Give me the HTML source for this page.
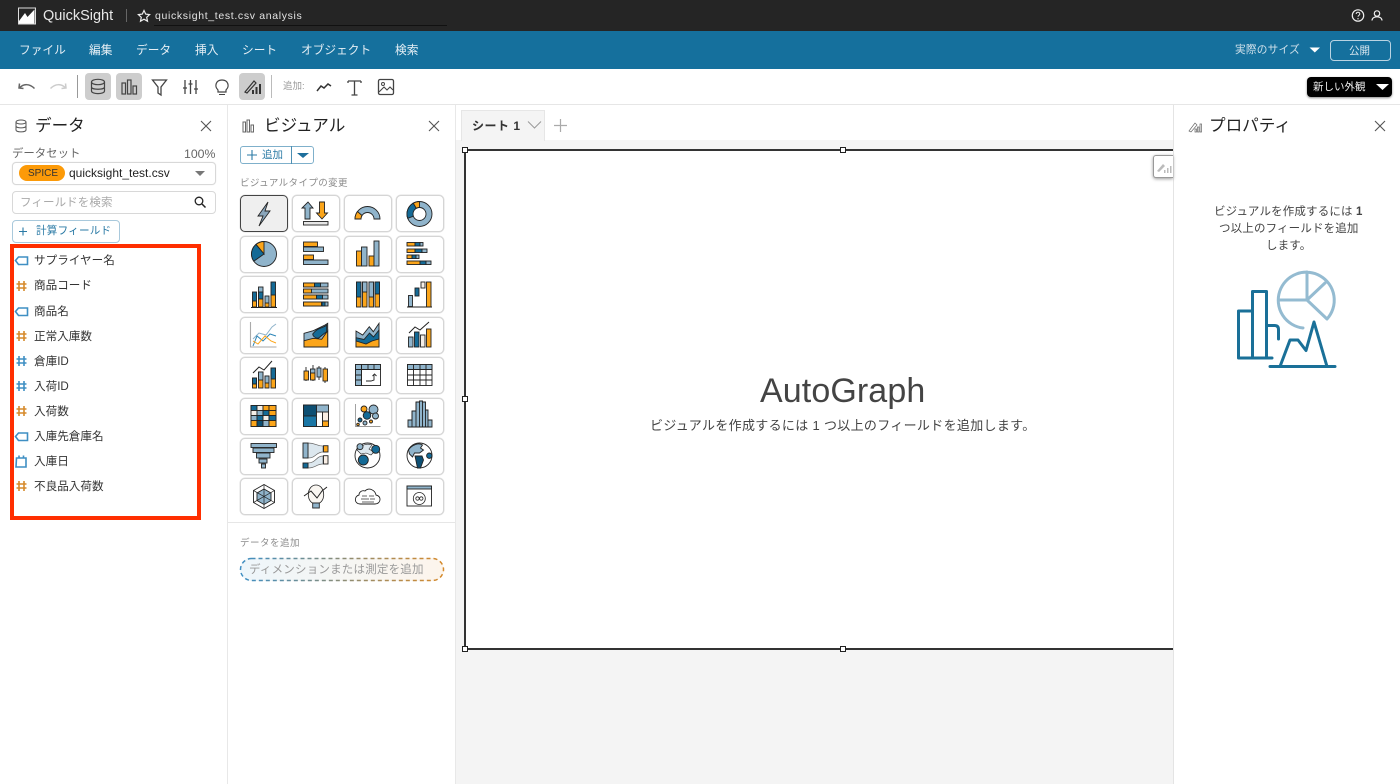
<!DOCTYPE html>
<html lang="ja"><head><meta charset="utf-8"><title>QuickSight</title>
<style>
html,body{margin:0;padding:0;background:#fff}
#p{position:relative;width:1400px;height:784px;overflow:hidden;background:#fff;font-family:"Liberation Sans","Noto Sans CJK JP",sans-serif;color:#222}
.a{position:absolute;white-space:nowrap;line-height:18px}
.b{position:absolute;box-sizing:border-box}
.m{color:#e6eff5;font-size:11.7px;top:42px}
.f{font-size:11.6px;left:34px;color:#333}
.h{font-size:16.6px;color:#222;line-height:24px}
.v{position:absolute;box-sizing:border-box;width:48px;height:37px;background:#fff;border:1px solid #d5d5d5;border-radius:5px;box-shadow:0 0 0 .5px #e2e2e2}
svg{position:absolute;left:0;top:0}
</style></head><body><div id="p">
<div class="b" style="left:0;top:0;width:1400px;height:31px;background:#252525"></div>
<div class="b" style="left:0;top:31px;width:1400px;height:38px;background:#15709d"></div>
<div class="b" style="left:0;top:104px;width:1400px;height:1px;background:#e6e6e6"></div>
<div class="b" style="left:227px;top:105px;width:1px;height:679px;background:#e8e8e8"></div>
<div class="b" style="left:455px;top:105px;width:1px;height:679px;background:#e8e8e8"></div>
<div class="b" style="left:456px;top:105px;width:717px;height:679px;background:#f4f4f4"></div>
<div class="b" style="left:456px;top:105px;width:717px;height:35px;background:#fff"></div>
<div class="b" style="left:461px;top:110px;width:84px;height:31px;background:#f4f4f4;border:1px solid #e6e6e6;border-bottom:0"></div>
<div class="b" style="left:1173px;top:105px;width:227px;height:679px;background:#fff;border-left:1px solid #e4e4e4"></div>
<div class="b" style="left:464px;top:149px;width:709px;height:500.500px;background:#fff;border:2px solid #333;border-right:0"></div>
<div class="b" style="left:1153px;top:155px;width:20px;height:23px;background:#fff;border:1px solid #999;border-right:0;border-radius:3px 0 0 3px;box-shadow:0 1px 3px #999"></div>

<!-- top bar text -->
<div class="a" style="left:43px;top:7px;font-size:14.5px;color:#e8e8e8;line-height:18px">QuickSight</div>
<div class="a" style="left:155px;top:7px;font-size:10.5px;color:#e4e4e4;letter-spacing:.66px">quicksight_test.csv analysis</div>
<div class="b" style="left:154px;top:25px;width:293px;height:1px;background:#111"></div>
<div class="b" style="left:126px;top:9px;width:1px;height:13px;background:#666"></div>
<div class="a m" style="left:19px">ファイル</div>
<div class="a m" style="left:89px">編集</div>
<div class="a m" style="left:136px">データ</div>
<div class="a m" style="left:195px">挿入</div>
<div class="a m" style="left:242px">シート</div>
<div class="a m" style="left:301px">オブジェクト</div>
<div class="a m" style="left:395px">検索</div>
<div class="a" style="left:1235px;top:41px;font-size:10.7px;color:#cfe0ea;letter-spacing:.2px">実際のサイズ</div>
<div class="b" style="left:1330px;top:40px;width:61px;height:21px;border:1px solid #b9d3e2;border-radius:4px"></div>
<div class="a" style="left:1349px;top:42px;font-size:10.5px;color:#d8e6ee">公開</div>

<!-- toolbar -->
<div class="b" style="left:85px;top:73px;width:26px;height:27px;background:#cdcdcd;border-radius:4px"></div>
<div class="b" style="left:116px;top:73px;width:26px;height:27px;background:#cdcdcd;border-radius:4px"></div>
<div class="b" style="left:239px;top:73px;width:26px;height:27px;background:#cdcdcd;border-radius:4px"></div>
<div class="b" style="left:77px;top:75px;width:1px;height:23px;background:#999"></div>
<div class="b" style="left:271px;top:75px;width:1px;height:23px;background:#bbb"></div>
<div class="a" style="left:283px;top:78px;font-size:9.5px;color:#999">追加:</div>
<div class="b" style="left:1307px;top:77px;width:85px;height:20px;background:#000;border-radius:4px;box-shadow:0 1px 2px #888"></div>
<div class="a" style="left:1313px;top:78px;font-size:10.5px;color:#eee">新しい外観</div>

<!-- data panel -->
<div class="a h" style="left:35px;top:114px">データ</div>
<div class="a" style="left:12px;top:145px;font-size:11.4px;color:#666">データセット</div>
<div class="a" style="left:184px;top:145px;font-size:12.3px;color:#666">100%</div>
<div class="b" style="left:12px;top:162px;width:204px;height:23px;border:1px solid #d8d8d8;border-radius:4px;box-shadow:0 0 1px #ddd"></div>
<div class="b" style="left:19px;top:165px;width:46px;height:16px;background:#fc9a08;border-radius:8px"></div>
<div class="a" style="left:28px;top:165px;font-size:10px;color:#333">SPICE</div>
<div class="a" style="left:69px;top:164px;font-size:12px;color:#222">quicksight_test.csv</div>
<div class="b" style="left:12px;top:191px;width:204px;height:23px;border:1px solid #d8d8d8;border-radius:4px"></div>
<div class="a" style="left:20px;top:194px;font-size:11.5px;color:#aaa;letter-spacing:.1px">フィールドを検索</div>
<div class="b" style="left:12px;top:220px;width:108px;height:23px;border:1px solid #a9c9dc;border-radius:4px"></div>
<div class="a" style="left:36px;top:222px;font-size:10.6px;color:#2a7aa5;letter-spacing:.2px">計算フィールド</div>
<div class="a f" style="top:252px">サプライヤー名</div>
<div class="a f" style="top:277px">商品コード</div>
<div class="a f" style="top:303px">商品名</div>
<div class="a f" style="top:328px">正常入庫数</div>
<div class="a f" style="top:353px">倉庫ID</div>
<div class="a f" style="top:378px">入荷ID</div>
<div class="a f" style="top:403px">入荷数</div>
<div class="a f" style="top:428px">入庫先倉庫名</div>
<div class="a f" style="top:453px">入庫日</div>
<div class="a f" style="top:478px">不良品入荷数</div>
<div class="b" style="left:9.500px;top:244px;width:191px;height:276px;border:4.500px solid #ff2e00"></div>

<!-- visuals panel -->
<div class="a h" style="left:264px;top:114px">ビジュアル</div>
<div class="b" style="left:240px;top:146px;width:74px;height:18px;border:1px solid #7fb0cb;border-radius:3px"></div>
<div class="b" style="left:291px;top:146px;width:1px;height:18px;background:#4d8fb3"></div>
<div class="a" style="left:262px;top:146px;font-size:10.5px;color:#2a7aa5">追加</div>
<div class="a" style="left:240px;top:175px;font-size:9.5px;color:#8b8b8b;letter-spacing:.4px">ビジュアルタイプの変更</div>
<div class="v" style="left:240px;top:195px;background:#efefef;border-color:#444"></div><div class="v" style="left:292px;top:195px"></div><div class="v" style="left:344px;top:195px"></div><div class="v" style="left:396px;top:195px"></div>
<div class="v" style="left:240px;top:236px"></div><div class="v" style="left:292px;top:236px"></div><div class="v" style="left:344px;top:236px"></div><div class="v" style="left:396px;top:236px"></div>
<div class="v" style="left:240px;top:276px"></div><div class="v" style="left:292px;top:276px"></div><div class="v" style="left:344px;top:276px"></div><div class="v" style="left:396px;top:276px"></div>
<div class="v" style="left:240px;top:317px"></div><div class="v" style="left:292px;top:317px"></div><div class="v" style="left:344px;top:317px"></div><div class="v" style="left:396px;top:317px"></div>
<div class="v" style="left:240px;top:357px"></div><div class="v" style="left:292px;top:357px"></div><div class="v" style="left:344px;top:357px"></div><div class="v" style="left:396px;top:357px"></div>
<div class="v" style="left:240px;top:398px"></div><div class="v" style="left:292px;top:398px"></div><div class="v" style="left:344px;top:398px"></div><div class="v" style="left:396px;top:398px"></div>
<div class="v" style="left:240px;top:438px"></div><div class="v" style="left:292px;top:438px"></div><div class="v" style="left:344px;top:438px"></div><div class="v" style="left:396px;top:438px"></div>
<div class="v" style="left:240px;top:478px"></div><div class="v" style="left:292px;top:478px"></div><div class="v" style="left:344px;top:478px"></div><div class="v" style="left:396px;top:478px"></div>
<div class="b" style="left:228px;top:522px;width:227px;height:1px;background:#e6e6e6"></div>
<div class="a" style="left:240px;top:535px;font-size:9.5px;color:#8b8b8b;letter-spacing:.5px">データを追加</div>
<div class="b" style="left:240px;top:558px;width:204px;height:23px;border-radius:12px;background:linear-gradient(90deg,#eef6fb,#fdf5ec)"></div>
<div class="a" style="left:249px;top:561px;font-size:11.5px;color:#999;letter-spacing:.2px">ディメンションまたは測定を追加</div>

<!-- canvas -->
<div class="a" style="left:472px;top:117px;font-size:12px;font-weight:bold;color:#333;letter-spacing:.5px">シート 1</div>
<div class="a" style="left:760px;top:372px;font-size:34px;line-height:38px;color:#444;font-weight:normal;letter-spacing:.1px">AutoGraph</div>
<div class="a" style="left:650px;top:417px;font-size:13px;color:#444;letter-spacing:.32px">ビジュアルを作成するには 1 つ以上のフィールドを追加します。</div>

<!-- properties -->
<div class="a h" style="left:1209px;top:114px">プロパティ</div>
<div class="a" style="left:1214px;top:203px;font-size:11.5px;color:#444;letter-spacing:.15px">ビジュアルを作成するには <b>1</b></div>
<div class="a" style="left:1219px;top:220px;font-size:11.5px;color:#444;letter-spacing:.15px">つ以上のフィールドを追加</div>
<div class="a" style="left:1266px;top:237px;font-size:11.5px;color:#444;letter-spacing:.15px">します。</div>

<svg width="1400" height="784" viewBox="0 0 1400 784" fill="none">
<!-- logo -->
<rect x="18.500" y="8" width="17" height="16" stroke="#ddd" stroke-width="1"/>
<path d="M19 23.500v-2.500l6-8 2.500 4 7-7.500v14z" fill="#fff"/>
<!-- star -->
<path d="M144 10.500l1.700 3.600 3.900.5-2.900 2.700.8 3.900-3.500-2-3.500 2 .8-3.900-2.900-2.700 3.900-.5z" stroke="#eee" stroke-width="1.200"/>
<!-- help / user -->
<circle cx="1358" cy="15.500" r="5.700" stroke="#eee" stroke-width="1.200"/><path d="M1356.200 14c0-2.400 3.600-2.400 3.600 0 0 1.400-1.800 1.400-1.800 2.800" stroke="#eee" stroke-width="1"/><circle cx="1358" cy="18.800" r=".7" fill="#eee"/>
<circle cx="1377" cy="13.500" r="2.700" stroke="#eee" stroke-width="1.200"/><path d="M1372 20.500c0-5 10-5 10 0" stroke="#eee" stroke-width="1.200"/>
<!-- dropdown menu arrows -->
<path d="M1309.500 47.500h10.500l-5.200 5z" fill="#fff"/><path d="M1376 84h13l-6.500 6z" fill="#fff"/>
<!-- undo/redo -->
<path d="M19.500 83.500l-.5 4.500 4.500.5M19.500 88c4-4.500 10-4.500 15 .5" stroke="#666" stroke-width="1.500"/>
<path d="M65.500 83.500l.5 4.500-4.500.5M65.500 88c-4-4.500-10-4.500-15 .5" stroke="#ccc" stroke-width="1.500"/>
<!-- db -->
<g stroke="#444" stroke-width="1.200"><ellipse cx="98" cy="82" rx="6.500" ry="2.700"/><path d="M91.500 82v9c0 3.500 13 3.500 13 0v-9M91.500 87c0 3 13 3 13 0"/></g>
<!-- bars -->
<g stroke="#444" stroke-width="1.200"><rect x="122" y="83" width="3.500" height="11"/><rect x="127.500" y="80" width="3.500" height="14"/><rect x="133" y="86" width="3.500" height="8"/></g>
<!-- filter -->
<path d="M152.500 80h14l-5.500 7v8l-3-2v-6z" stroke="#444" stroke-width="1.300"/>
<!-- sliders -->
<g stroke="#444" stroke-width="1.300"><path d="M185 80v14M190.500 80v14M196 80v14M183 88h4M188.500 84h4M194 89h4"/></g>
<!-- bulb -->
<path d="M218 90c-4-4-2-10 4-10s8 6 4 10v2h-8z" stroke="#444" stroke-width="1.200"/><path d="M219 94.500h6" stroke="#444"/>
<!-- properties tool -->
<g><path d="M245 92l9-11 2 2-9 10z" stroke="#333" stroke-width="1.200"/><path d="M252 94v-4h2v4zM255.500 94v-7h2v7zM259 94v-10h2v10z" fill="#333"/></g>
<!-- add icons -->
<path d="M317 91l4-5 3 2 4-4 3 2" stroke="#333" stroke-width="1.500"/>
<path d="M348 81h13M354.500 81v14M351.500 95h6M348 81v2M361 81v2" stroke="#444" stroke-width="1.300"/>
<rect x="378.500" y="79.500" width="15" height="15" rx="1.500" stroke="#444" stroke-width="1.300"/><path d="M379 92l5-5 3 3 3-3 3 3" stroke="#444" stroke-width="1.100"/><circle cx="383" cy="84" r="1.500" stroke="#444"/>
<!-- panel icons: data -->
<g stroke="#555" stroke-width="1"><ellipse cx="21" cy="122" rx="5" ry="2"/><path d="M16 122v8c0 2.500 10 2.500 10 0v-8M16 126c0 2.500 10 2.500 10 0"/></g>
<path d="M201 121l10 10M211 121l-10 10M429 121l10 10M439 121l-10 10M1375 121l10 10M1385 121l-10 10" stroke="#555" stroke-width="1.100"/>
<path d="M195 171h10l-5 5z" fill="#777"/>
<circle cx="199" cy="201" r="3.800" stroke="#222" stroke-width="1.300"/><path d="M202 204l3.500 3.500" stroke="#222" stroke-width="1.500"/>
<path d="M19 231.500h8M23 227.500v8" stroke="#2a7aa5" stroke-width="1.100"/>
<!-- field icons -->
<g stroke="#3f8fc3" stroke-width="1.600"><path d="M15.500 260.500l3-3.500h9v7.500h-9zM15.500 311.500l3-3.500h9v7.500h-9zM15.500 436.500l3-3.500h9v7.500h-9z"/>
<path d="M16.500 458h9.500v9h-10zM19 455.500v3M23.500 455.500v3"/></g>
<g stroke="#d68a2b" stroke-width="1.600"><path d="M19 281v10M24 281v10M16.500 284h10M16.500 288h10M19 331v10M24 331v10M16.500 334h10M16.500 338h10M19 406v10M24 406v10M16.500 409h10M16.500 413h10M19 481v10M24 481v10M16.500 484h10M16.500 488h10"/></g>
<g stroke="#3f8fc3" stroke-width="1.600"><path d="M19 356v10M24 356v10M16.500 359h10M16.500 363h10M19 381v10M24 381v10M16.500 384h10M16.500 388h10"/></g>
<!-- visual header icons -->
<g stroke="#666" stroke-width="1"><rect x="243" y="122" width="2.500" height="10"/><rect x="247" y="120" width="2.500" height="12"/><rect x="251" y="125" width="2.500" height="7"/></g>
<path d="M247 155h10M252 150v10" stroke="#2a7aa5" stroke-width="1.100"/>
<path d="M297 153h12l-6 5z" fill="#1d6f9d"/>
<!-- visual icons -->
<g stroke="#222" stroke-width=".9">
<path d="M268 202l-10 14h5l-4 10 11-15h-5z" fill="#8aa6bb"/>
<path d="M308 202l5 6h-3v11h-5v-11h-3z" fill="#90b4cb"/><path d="M322 219l5.500-6h-3v-11h-5v11h-3z" fill="#fba51a"/><rect x="303.500" y="221.500" width="24.500" height="3.500" fill="#e6e6e6"/>
<path d="M355 219a12.500 12.500 0 0 1 25 0h-6a6.500 6.500 0 0 0-13 0z" fill="#90b4cb"/><path d="M355 219a12.500 12.500 0 0 1 2.500-7.500l4.500 4a6.500 6.500 0 0 0-1 3.500z" fill="#fba51a"/>
<circle cx="419.500" cy="214" r="12.500" fill="#90b4cb"/><path d="M419.500 214V201.500A12.500 12.500 0 0 0 413.200 203.200z" fill="#fba51a"/><path d="M419.500 214L413.200 203.200A12.500 12.500 0 0 0 407.700 218.300z" fill="#146a96"/><circle cx="419.500" cy="214" r="6.500" fill="#fff"/>
<circle cx="264" cy="254" r="12.500" fill="#90b4cb"/><path d="M264 254V241.500A12.500 12.500 0 0 0 256 244.400z" fill="#fba51a"/><path d="M264 254L256 244.400A12.500 12.500 0 0 0 253.800 261.200z" fill="#146a96"/>
<g><rect x="303.500" y="242" width="14" height="4.500" fill="#fba51a"/><rect x="303.500" y="247" width="20" height="4.500" fill="#90b4cb"/><rect x="303.500" y="255" width="10" height="4.500" fill="#fba51a"/><rect x="303.500" y="260" width="24.500" height="4.500" fill="#90b4cb"/></g>
<g><rect x="356.500" y="251" width="5" height="15" fill="#fba51a"/><rect x="361.500" y="247" width="5.500" height="19" fill="#90b4cb"/><rect x="369" y="256" width="5" height="10" fill="#fba51a"/><rect x="374" y="241" width="5" height="25" fill="#90b4cb"/></g>
<g><rect x="407" y="242.500" width="8" height="3.500" fill="#fba51a"/><rect x="415" y="242.500" width="5" height="3.500" fill="#146a96"/><rect x="420" y="242.500" width="3" height="3.500" fill="#90b4cb"/><rect x="407" y="249" width="8" height="3.500" fill="#fba51a"/><rect x="415" y="249" width="7" height="3.500" fill="#146a96"/><rect x="422" y="249" width="5" height="3.500" fill="#90b4cb"/><rect x="407" y="255" width="5" height="3.500" fill="#fba51a"/><rect x="412" y="255" width="4" height="3.500" fill="#146a96"/><rect x="416" y="255" width="3" height="3.500" fill="#90b4cb"/><rect x="407" y="261" width="13" height="3.500" fill="#fba51a"/><rect x="420" y="261" width="6" height="3.500" fill="#146a96"/><rect x="426" y="261" width="5" height="3.500" fill="#90b4cb"/></g>

<!-- row 3 -->
<g><rect x="252.500" y="292" width="4" height="15" fill="#146a96"/><rect x="252.500" y="301" width="4" height="6" fill="#fba51a"/><rect x="258.500" y="287" width="4.500" height="20" fill="#90b4cb"/><rect x="258.500" y="292" width="4.500" height="7" fill="#146a96"/><rect x="258.500" y="299" width="4.500" height="8" fill="#fba51a"/><rect x="265" y="296" width="4" height="11" fill="#90b4cb"/><rect x="265" y="303" width="4" height="4" fill="#fba51a"/><rect x="271" y="282" width="4.500" height="25" fill="#146a96"/><rect x="271" y="295" width="4.500" height="12" fill="#fba51a"/><path d="M251 307.500h26" /></g>
<g><rect x="303.500" y="283" width="24.500" height="4" fill="#90b4cb"/><rect x="303.500" y="283" width="11" height="4" fill="#fba51a"/><rect x="314.500" y="283" width="6" height="4" fill="#146a96"/><rect x="303.500" y="289" width="24.500" height="4" fill="#90b4cb"/><rect x="303.500" y="289" width="8" height="4" fill="#fba51a"/><rect x="303.500" y="295" width="24.500" height="4" fill="#90b4cb"/><rect x="303.500" y="295" width="13" height="4" fill="#fba51a"/><rect x="316.500" y="295" width="6" height="4" fill="#146a96"/><rect x="303.500" y="302" width="24.500" height="4" fill="#90b4cb"/><rect x="303.500" y="302" width="18" height="4" fill="#fba51a"/><rect x="322" y="302" width="3" height="4" fill="#146a96"/></g>
<g><rect x="356.500" y="282" width="4.500" height="25" fill="#fba51a"/><rect x="356.500" y="282" width="4.500" height="15" fill="#146a96"/><rect x="362.500" y="282" width="4.500" height="25" fill="#fba51a"/><rect x="362.500" y="282" width="4.500" height="10" fill="#90b4cb"/><rect x="369" y="282" width="4.500" height="25" fill="#fba51a"/><rect x="369" y="282" width="4.500" height="15" fill="#90b4cb"/><rect x="375" y="282" width="4.500" height="25" fill="#fba51a"/><rect x="375" y="282" width="4.500" height="12" fill="#146a96"/></g>
<g><rect x="408.500" y="295.500" width="4" height="11" fill="#90b4cb"/><rect x="415" y="288" width="4" height="8" fill="#146a96"/><rect x="421" y="282" width="4" height="6" fill="#f5efe8"/><rect x="426.500" y="282" width="4.500" height="25" fill="#fba51a"/><path d="M407 307h25"/></g>

<!-- row 4 -->
<path d="M250.500 322v25h26" stroke="#aaa" stroke-width="1.100"/>
<path d="M253 339l6-6 7 2 6-8 4-3" stroke="#90b4cb" stroke-width="1"/><path d="M253 346l4-10 6 5 7-7 6 2" stroke="#2e86b8" stroke-width="1"/><path d="M253 341l5 3 7-8 6 5 5 2" stroke="#fba51a" stroke-width="1"/>
<path d="M304 347V333.300L313.300 330.700 325 325 327.700 323.300V347z" fill="#90b4cb"/><path d="M304 347V340.700L313.300 338.300 321.700 339.300 327.700 330.700V347z" fill="#fba51a"/><path d="M312.700 334C315 331 318 329 320 328.300 323 327 325 326.500 326.700 325V331.700C323 334 321 336.500 318.300 338.300 315.500 338 313 336.500 312.700 334z" fill="#146a96"/>
<path d="M356 347V331L362.700 335 369.300 326.700 373.300 331.700 379 323.300V347z" fill="#90b4cb"/><path d="M356 347V337.700L364 339.500 369.500 333 373.500 337 379 330V347z" fill="#146a96"/><path d="M356 347V341L366 344 372 341 379 339V347z" fill="#fba51a"/>
<rect x="408.500" y="337" width="4.500" height="10" fill="#90b4cb"/><rect x="414.500" y="332" width="4.500" height="15" fill="#146a96"/><rect x="420.500" y="335" width="4.500" height="12" fill="#f5efe8"/><rect x="426.500" y="329" width="4.500" height="18" fill="#fba51a"/><path d="M409 333l6-6 5 3 9-8" stroke-width="1"/>

<!-- row 5 -->
<g><rect x="252.500" y="378" width="4" height="10" fill="#fba51a"/><rect x="252.500" y="378" width="4" height="6" fill="#146a96"/><rect x="258.500" y="372" width="4.500" height="16" fill="#fba51a"/><rect x="258.500" y="372" width="4.500" height="8" fill="#90b4cb"/><rect x="265" y="376" width="4" height="12" fill="#fba51a"/><rect x="265" y="376" width="4" height="7" fill="#90b4cb"/><rect x="271" y="368" width="4.500" height="20" fill="#fba51a"/><rect x="271" y="368" width="4.500" height="11" fill="#146a96"/><path d="M253 373l6-6 5 3 8-9" stroke-width="1"/></g>
<g><path d="M306 367v14M313 365v16M319 366v14M325 367v16"/><rect x="304" y="371" width="4.500" height="9" fill="#fba51a"/><rect x="310.500" y="369" width="4.500" height="10" fill="#90b4cb"/><rect x="310.500" y="373" width="4.500" height="7" fill="#fba51a"/><rect x="317" y="368" width="4" height="9" fill="#90b4cb"/><rect x="323" y="369" width="4.500" height="12" fill="#fba51a"/></g>
<g><rect x="355.500" y="364.500" width="25" height="21" fill="#fff"/><rect x="355.500" y="364.500" width="25" height="5" fill="#90b4cb"/><rect x="355.500" y="364.500" width="6" height="21" fill="#90b4cb"/><path d="M361.500 364.500v21M355.500 369.500h25M368 364.500v5M374 364.500v5M355.500 375h6M355.500 380h6M366 381h5l3-1v-5M372.500 376l2-2 2 2" /></g>
<g><rect x="407.500" y="364.500" width="24.500" height="21" fill="#fff"/><rect x="407.500" y="364.500" width="24.500" height="5" fill="#90b4cb"/><path d="M407.500 369.500h24.500M407.500 375h24.500M407.500 380h24.500M413.500 364.500v21M420 364.500v21M426 364.500v21"/></g>

<!-- row 6 -->
<g><rect x="251" y="405.500" width="25" height="21" fill="#fff"/><rect x="251" y="405.500" width="6" height="5" fill="#146a96"/><rect x="257" y="405.500" width="6" height="5" fill="#f5efe8"/><rect x="263" y="405.500" width="6" height="5" fill="#fba51a"/><rect x="269" y="405.500" width="7" height="5" fill="#fba51a"/><rect x="251" y="410.500" width="6" height="5" fill="#f5efe8"/><rect x="257" y="410.500" width="6" height="5" fill="#90b4cb"/><rect x="263" y="410.500" width="6" height="5" fill="#146a96"/><rect x="269" y="410.500" width="7" height="5" fill="#fba51a"/><rect x="251" y="415.500" width="6" height="5" fill="#90b4cb"/><rect x="257" y="415.500" width="6" height="5" fill="#146a96"/><rect x="263" y="415.500" width="6" height="5" fill="#f5efe8"/><rect x="269" y="415.500" width="7" height="5" fill="#146a96"/><rect x="251" y="420.500" width="6" height="6" fill="#fba51a"/><rect x="257" y="420.500" width="6" height="6" fill="#0d4f73"/><rect x="263" y="420.500" width="6" height="6" fill="#90b4cb"/><rect x="269" y="420.500" width="7" height="6" fill="#fba51a"/></g>
<g><rect x="303.500" y="405" width="25" height="21.500" fill="#90b4cb"/><rect x="303.500" y="405" width="13" height="11" fill="#0d4f73"/><rect x="303.500" y="416" width="13" height="10.500" fill="#1a76a5"/><rect x="316.500" y="412" width="6" height="14.500" fill="#fff"/><rect x="322.500" y="412" width="6" height="9" fill="#f9eee4"/><rect x="322.500" y="421" width="6" height="5.500" fill="#fba51a"/></g>
<path d="M355.500 404v22.500h25" stroke="#999"/>
<circle cx="373.500" cy="409.500" r="4.500" fill="#90b4cb"/><circle cx="364" cy="409" r="3" fill="#fba51a"/><circle cx="367" cy="415.500" r="3.800" fill="#146a96"/><circle cx="375.500" cy="416" r="3" fill="#90b4cb"/><circle cx="360" cy="420" r="2" fill="#146a96"/><circle cx="365" cy="423" r="2" fill="#90b4cb"/><circle cx="371" cy="421.500" r="1.500" fill="#fba51a"/><circle cx="358" cy="424.500" r="1.300" fill="#fba51a"/>
<path d="M408 427v-7h4v-9h4v-9h3.500v-1h3v1h3v8h2.500v10h4v7z" fill="#90b4cb"/><path d="M412 427v-16M416 427v-25M419.500 427v-25M422.500 427v-25M425.500 427v-17M428 427v-7"/>

<!-- row 7 -->
<g><rect x="251" y="443.500" width="25.500" height="4" fill="#90b4cb"/><rect x="253" y="448" width="21" height="4.500" fill="#90b4cb"/><rect x="256.500" y="453" width="13.500" height="5" fill="#90b4cb"/><rect x="259" y="459" width="8" height="4" fill="#90b4cb"/><rect x="261.500" y="464" width="4" height="4" fill="#90b4cb"/></g>
<path d="M308 443C316 443 316 446 323 446V452C316 452 316 458 308 458z" fill="#dce7ee" stroke="#666" stroke-width=".7"/><path d="M308 463C316 463 316 456 323 456V464C316 464 316 468 308 468z" fill="#dce7ee" stroke="#666" stroke-width=".7"/>
<rect x="303" y="443" width="5" height="15" fill="#90b4cb"/><rect x="303" y="463" width="5" height="5" fill="#146a96"/><rect x="323.500" y="445.700" width="4.500" height="6.300" fill="#fba51a"/><rect x="323.500" y="455.700" width="4.500" height="8.300" fill="#f9eee4"/>
<circle cx="367.500" cy="455.500" r="12.500" fill="#fff"/><path d="M357 450c4-5 10-7 15-5l-3 4 5 3-3 3-5-2-5 1-3-3z" fill="#dce7ee" stroke-width=".6"/><circle cx="360" cy="446.700" r="3" fill="#90b4cb"/><circle cx="375.700" cy="449.300" r="4" fill="#146a96"/><circle cx="363.300" cy="460" r="5" fill="#146a96"/>
<circle cx="419.500" cy="455.500" r="12.500" fill="#fff"/><path d="M408.500 450c3-5 10-7.500 14-5l-2 3 3 2-4 3h-5l-2 4-3-3z" fill="#90b4cb"/><path d="M415 456h7l1.500 4-3 8h-3z" fill="#0d4f73"/><circle cx="429.300" cy="455.700" r="2.700" fill="#146a96"/>

<!-- row 8 -->
<path d="M264 484.500l10.500 6v12l-10.500 6-10.500-6v-12z" fill="#fff"/><path d="M264 489l7 4v7.500l-7 4-7-4V493z" fill="#90b4cb"/><path d="M264 484.500v24M253.500 490.500l21 12M274.500 490.500l-21 12" stroke-width=".7"/>
<path d="M312.500 503c-7-4-5-18 3.500-18s10.500 14 3.500 18z" fill="#f9f6f1" stroke-width=".8"/><rect x="312.700" y="503" width="6.600" height="5" fill="#90b4cb"/><path d="M304 496l7-5 6 7 5-7 5-4" stroke-width="1"/>
<path d="M360 504h15c6 0 7-8 1-9-1-5-7-8-11-4-3-1-6 1-6 4-5 1-5 9 1 9z" fill="#fff" stroke-width=".9"/><path d="M362 496h5M369 496h5M361 499h8M370 499h5M362 502h12" stroke="#666" stroke-width=".9"/>
<rect x="407" y="486" width="24.500" height="20" fill="#fff"/><rect x="407" y="486" width="24.500" height="3" fill="#90b4cb"/><circle cx="419.300" cy="498.500" r="6" stroke-width=".8"/><circle cx="417.500" cy="498.500" r="1.700" stroke-width=".8"/><circle cx="421.300" cy="498.500" r="1.700" stroke-width=".8"/>
</g>

<!-- dashed pill -->
<rect x="240.500" y="558.500" width="203" height="22" rx="11" stroke="url(#dg)" stroke-width="1.500" stroke-dasharray="4 3"/>
<defs><linearGradient id="dg" x1="0" x2="1" y1="0" y2="0"><stop offset="0" stop-color="#3f8fc3"/><stop offset="1" stop-color="#d68a2b"/></linearGradient></defs>

<!-- tab -->
<path d="M528 121.500l6.500 6.500 6.500-6.500" stroke="#999" stroke-width="1"/>
<path d="M560.500 119v13M554 125.500h13" stroke="#aaa" stroke-width="1.200"/>

<!-- handles -->
<g fill="#fff" stroke="#222" stroke-width="1"><rect x="462.500" y="147.500" width="5" height="5"/><rect x="840.500" y="147.500" width="5" height="5"/><rect x="462.500" y="396.500" width="5" height="5"/><rect x="462.500" y="646.500" width="5" height="5"/><rect x="840.500" y="646.500" width="5" height="5"/></g>

<!-- small props icon on canvas -->
<path d="M1157 171l6-7 2 2-6 6zM1164 173v-3h1.500v3zM1167 173v-5h1.500v5zM1170 173v-7h1.500v7z" fill="#bbb"/>
<path d="M1189 131l6-8 2 2-6 7zM1195 132v-3h1.500v3zM1197.500 132v-5h1.500v5zM1200 132v-8h1.500v8z" stroke="#666" stroke-width=".7"/>

<!-- properties illustration -->
<g stroke="#1a7098" stroke-width="3" stroke-linejoin="round" stroke-linecap="round">
<path d="M1272 358h-33.500v-47h14M1252.500 358v-66.500h14V358M1266.500 325.500h8q4 0 4 4v9.500"/>
<path d="M1270 366.500h65M1280 366.500l10-26.500h8l8 10.500 8-28.500 13 44.500"/></g>
<g stroke="#94bbd1" stroke-width="3" stroke-linejoin="round" stroke-linecap="round">
<path d="M1303 328A28 28 0 1 1 1327 319L1307 300H1279M1307 272V300L1325 283"/></g>
</svg>
</div></body></html>
